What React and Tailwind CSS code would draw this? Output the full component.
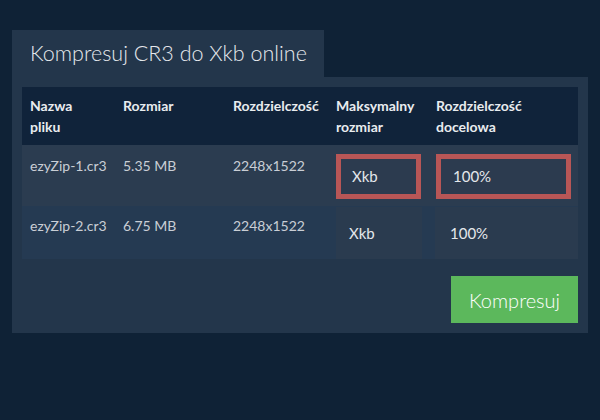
import React from "react";

const rows = [
  { name: "ezyZip-1.cr3", size: "5.35 MB", res: "2248x1522", active: true },
  { name: "ezyZip-2.cr3", size: "6.75 MB", res: "2248x1522", active: false },
];

export default function App() {
  return (
    <div
      className="w-[600px] h-[420px] bg-[#0f2236] pt-[30px] px-[12px]"
      style={{ fontFamily: "Lato, 'Open Sans', sans-serif" }}
    >
      <div className="w-[312px] h-[47px] bg-[#23364b] flex items-center pl-[18px]">
        <h1 className="text-[21.5px] text-[#e6e9ed] font-light">
          Kompresuj CR3 do Xkb online
        </h1>
      </div>

      <div className="w-[576px] bg-[#23364b] p-[10px]">
        {/* header */}
        <div className="grid grid-cols-[93px_110px_103px_100px_150px] h-[58px] bg-[#10233a] text-[14px] font-bold text-[#e9ecef] leading-[21px] pt-[8px]">
          <div className="pl-[8px]">Nazwa<br />pliku</div>
          <div className="pl-[8px]">Rozmiar</div>
          <div className="pl-[8px]">Rozdzielczość</div>
          <div className="pl-[8px]">Maksymalny<br />rozmiar</div>
          <div className="pl-[8px]">Rozdzielczość<br />docelowa</div>
        </div>

        {/* rows */}
        {rows.map((r) =>
          r.active ? (
            <div
              key={r.name}
              className="grid grid-cols-[93px_110px_103px_100px_150px] h-[61px] bg-[#2b3c50] text-[14px] text-[#c9ced5]"
            >
              <div className="pl-[8px] pt-[10px]">{r.name}</div>
              <div className="pl-[8px] pt-[10px]">{r.size}</div>
              <div className="pl-[8px] pt-[10px]">{r.res}</div>
              <div className="pl-[8px] pt-[9px]">
                <div className="w-[85px] h-[45px] border-[5px] border-[#b85656] bg-[#2c3b4f] flex items-center pl-[11px] text-[15px] text-[#e4e7eb]">
                  Xkb
                </div>
              </div>
              <div className="pl-[8px] pt-[9px]">
                <div className="w-[135px] h-[45px] border-[5px] border-[#b85656] bg-[#2c3b4f] flex items-center pl-[12px] text-[15px] text-[#e4e7eb]">
                  100%
                </div>
              </div>
            </div>
          ) : (
            <div
              key={r.name}
              className="grid grid-cols-[93px_110px_103px_100px_150px] h-[53px] bg-[#253a52] text-[14px] text-[#c9ced5]"
            >
              <div className="pl-[8px] pt-[9px]">{r.name}</div>
              <div className="pl-[8px] pt-[9px]">{r.size}</div>
              <div className="pl-[8px] pt-[9px]">{r.res}</div>
              <div className="pl-[8px] pt-[1px]">
                <div className="w-[86px] h-[52px] bg-[#2a3b4f] flex items-center pl-[13px] text-[15px] text-[#e4e7eb]">
                  Xkb
                </div>
              </div>
              <div className="pl-[7px] pt-[1px]">
                <div className="w-[143px] h-[52px] bg-[#2a3b4f] flex items-center pl-[15px] text-[15px] text-[#e4e7eb]">
                  100%
                </div>
              </div>
            </div>
          )
        )}

        <div className="flex justify-end mt-[17px]">
          <button className="w-[127px] h-[47px] bg-[#5cb85c] text-white text-[20px] font-light">
            Kompresuj
          </button>
        </div>
      </div>
    </div>
  );
}
